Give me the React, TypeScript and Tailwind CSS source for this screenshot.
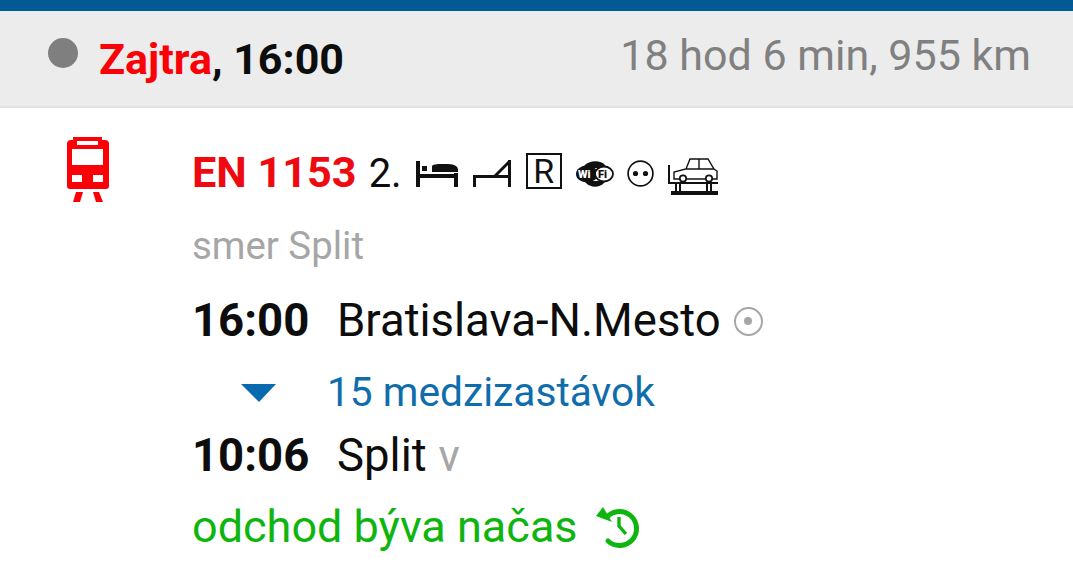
import React from 'react';

function TrainIcon() {
  return (
    <svg width="44" height="66" viewBox="0 0 44 66" className="block">
      <path fill="#fb0007" fillRule="evenodd" d="M7 0h29v3h3a4 4 0 0 1 4 4v42a3 3 0 0 1-3 3H4a3 3 0 0 1-3-3V7a4 4 0 0 1 4-4h2zM11 4v4h21V4zM6 12v16h31V12zM6 38v7h10v-7zM27 38v7h10v-7z" />
      <path fill="#fb0007" d="M10 55h7l-3 10H7zM27 55h6l4 10h-7z" />
    </svg>
  );
}

function BedIcon() {
  return (
    <svg width="42" height="26" viewBox="0 0 42 26" className="block">
      <path fill="#111" d="M0 0h4v13h34v-1h4v14h-4v-9H4v9H0z" />
      <path fill="#111" d="M6 5h5v5H6zM16 5c2-2 6-2 13-2 8 0 13 1 13 6v2H16z" />
    </svg>
  );
}

function CouchetteIcon() {
  return (
    <svg width="38" height="27" viewBox="0 0 38 27" className="block">
      <path fill="none" stroke="#111" strokeWidth="3" d="M1.5 27V16.5h35M22 16l14-14M36.5 0v27" />
    </svg>
  );
}

function WifiIcon() {
  return (
    <svg width="38" height="26" viewBox="0 0 38 26" className="block">
      <path fill="#111" d="M8 5c5-6 17-6 21-1 2 2-1 3-3 3H11C8 7 7 6 8 5zM10 20h17c2 0 2 1 1 2-5 5-13 5-18 0-1-1-1-2 0-2z" />
      <ellipse cx="11" cy="13" rx="11" ry="8.5" fill="#111" />
      <ellipse cx="28" cy="13" rx="9" ry="7.5" fill="#fff" stroke="#111" strokeWidth="1.8" />
      <text x="2" y="17" fontSize="11" fontWeight="900" fill="#fff" fontFamily="Roboto, sans-serif">Wi</text>
      <text x="22" y="17" fontSize="11" fontWeight="900" fill="#111" fontFamily="Roboto, sans-serif">Fi</text>
    </svg>
  );
}

function SocketIcon() {
  return (
    <svg width="27" height="27" viewBox="0 0 27 27" className="block">
      <circle cx="13.5" cy="13.5" r="12.4" fill="none" stroke="#111" strokeWidth="1.7" />
      <circle cx="8.5" cy="13.5" r="2.6" fill="#111" />
      <circle cx="18.5" cy="13.5" r="2.6" fill="#111" />
    </svg>
  );
}

function CarTrainIcon() {
  return (
    <svg width="52" height="37" viewBox="0 0 52 37" className="block">
      <path fill="none" stroke="#111" strokeWidth="2" d="M3 7v18h49" />
      <path fill="none" stroke="#111" strokeWidth="1.4" d="M13 21H8v-7l12-3 4-10h18l6 10 3 2v8h-5M21 21h18M20 11h28M33 1v10" />
      <circle cx="17" cy="20.5" r="3.2" fill="#fff" stroke="#111" strokeWidth="1.7" />
      <circle cx="43" cy="20.5" r="3.2" fill="#fff" stroke="#111" strokeWidth="1.7" />
      <path fill="#111" d="M5 33h47v4H5zM9 26h2v7H9zM13 26h2v7h-2zM40 26h2v7h-2zM44 26h2v7h-2z" />
    </svg>
  );
}

function HistoryIcon() {
  return (
    <svg width="44" height="44" viewBox="0 0 44 44" className="block">
      <path fill="none" stroke="#0fb50f" strokeWidth="5" strokeLinecap="round" d="M11 12a17 17 0 1 1 1 24" />
      <path fill="#0fb50f" d="M0 11l7-9 9 15z" />
      <path fill="none" stroke="#0fb50f" strokeWidth="3.4" d="M23 12v9l7 8" />
    </svg>
  );
}

export default function App() {
  return (
    <div className="w-[1073px] h-[579px] overflow-hidden bg-white font-['Roboto',sans-serif]">
      <div className="h-[11px] bg-[#005a94]"></div>

      {/* Header */}
      <div className="h-[97px] bg-[#ececec] border-b-2 border-[#e2e2e2] flex items-center justify-between pl-12 pr-[42px] pb-[7px]">
        <div className="flex items-center">
          <span className="w-[30px] h-[30px] rounded-full bg-[#7f7f7f] mr-[21px] mb-[4px]"></span>
          <span className="pt-[8px] text-[43px] leading-[44px] font-bold text-[#0d0d0d]">
            <span className="text-[#fb0007]">Zajtra</span>, 16:00
          </span>
        </div>
        <span className="text-[43px] leading-[44px] text-[#808080]">18 hod 6 min, 955 km</span>
      </div>

      {/* Connection */}
      <div className="flex pl-[66px] pt-[29px]">
        <div className="w-[126px] shrink-0">
          <TrainIcon />
        </div>
        <div className="flex flex-col">
          <div className="flex items-center h-[73px]">
            <span className="text-[43.2px] font-bold text-[#ee0a10] mr-[12px]">EN 1153</span>
            <span className="text-[40px] text-[#0d0d0d] mr-[14px]">2.</span>
            <div className="flex items-center">
              <BedIcon />
              <div className="ml-[15px]"><CouchetteIcon /></div>
              <span className="ml-[15px] mb-[6px] w-[36px] h-[36px] border-2 border-[#111] flex items-center justify-center text-[34px] leading-none text-[#111]">R</span>
              <div className="ml-[14px]"><WifiIcon /></div>
              <div className="ml-[13px]"><SocketIcon /></div>
              <div className="ml-[12px] mt-[5px]"><CarTrainIcon /></div>
            </div>
          </div>
          <div className="mt-[14px] text-[38.4px] leading-[44px] text-[#a6a6a6]">smer Split</div>
          <div className="flex items-center mt-[31px] h-[44px]">
            <span className="w-[145px] text-[45.5px] font-bold text-[#0d0d0d]">16:00</span>
            <span className="text-[45.5px] text-[#0d0d0d] mr-[13px]">Bratislava-N.Mesto</span>
            <span className="w-[29px] h-[29px] rounded-full border-2 border-[#a6a6a6] flex items-center justify-center">
              <span className="w-[8px] h-[8px] rounded-full bg-[#a6a6a6]"></span>
            </span>
          </div>
          <div className="flex items-center mt-[28px] h-[44px]">
            <span className="ml-[49px] mr-[51px] w-0 h-0 border-l-[18px] border-r-[17px] border-t-[18px] border-l-transparent border-r-transparent border-t-[#0a6ab0]"></span>
            <span className="text-[40.7px] text-[#0f6dac]">15 medzizastávok</span>
          </div>
          <div className="flex items-center mt-[19px] h-[44px]">
            <span className="w-[145px] text-[45.5px] font-bold text-[#0d0d0d]">10:06</span>
            <span className="text-[45.5px] text-[#0d0d0d] mr-[12px]">Split</span>
            <span className="text-[44px] text-[#a6a6a6]">v</span>
          </div>
          <div className="flex items-center mt-[27px] h-[44px]">
            <span className="text-[45px] text-[#0fb50f] mr-[18px]">odchod býva načas</span>
            <HistoryIcon />
          </div>
        </div>
      </div>
    </div>
  );
}
